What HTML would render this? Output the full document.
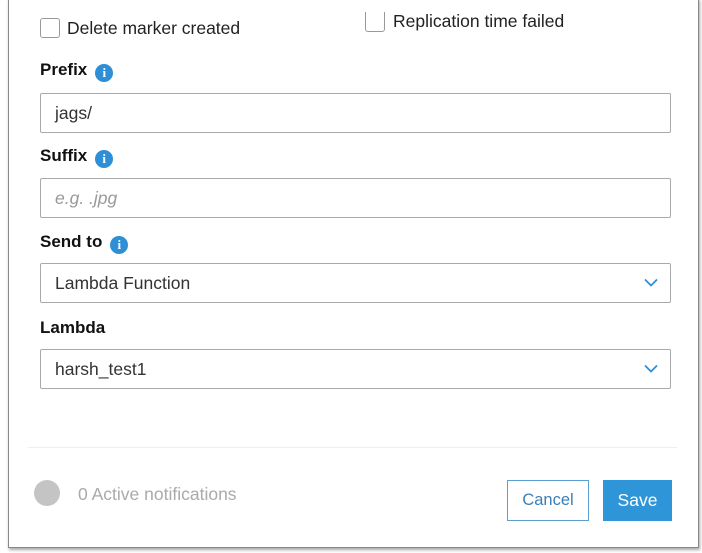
<!DOCTYPE html>
<html><head><style>
body{margin:0;width:702px;height:553px;background:#fff;position:relative;font-family:"Liberation Sans",Arial,sans-serif;overflow:hidden}
.a{position:absolute}
.frame{left:8px;top:-2px;width:689px;height:549px;border:1px solid #888;border-top:none;box-shadow:1px 2px 3px rgba(0,0,0,.35)}
.cb{width:18px;height:18px;border:1px solid #999;border-radius:3px;background:#fff}
.t{font-size:17.5px;color:#222}
.lbl{font-size:17px;font-weight:bold;color:#111}
.info{display:inline-block;width:18px;height:18px;border-radius:50%;background:#2e8fd6;color:#fff;font-size:13px;font-weight:bold;text-align:center;line-height:18px;font-family:"Liberation Serif",serif;margin-left:8px;vertical-align:-2px}
.in{left:40px;height:38px;border:1px solid #aaa;border-radius:2px;font-size:17.5px;color:#333;line-height:38px;padding-left:14px;box-sizing:content-box;width:615px}
.chev{position:absolute;right:12px;top:14px}
</style></head><body>
<div class="a frame"></div>
<div class="a cb" style="left:40px;top:18px"></div>
<div class="a t" style="left:67px;top:18px">Delete marker created</div>
<div class="a cb" style="left:365px;top:12px;border-top:none;border-radius:0 0 3px 3px;height:19px"></div>
<div class="a t" style="left:393px;top:11px">Replication time failed</div>
<div class="a lbl" style="left:40px;top:60px">Prefix<span class="info">i</span></div>
<div class="a in" style="top:93px">jags/</div>
<div class="a lbl" style="left:40px;top:146px">Suffix<span class="info">i</span></div>
<div class="a in" style="top:178px;color:#999;font-style:italic">e.g. .jpg</div>
<div class="a lbl" style="left:40px;top:232px">Send to<span class="info">i</span></div>
<div class="a in" style="top:263px">Lambda Function<svg class="chev" width="14" height="9" viewBox="0 0 14 9"><path d="M1 1.5L7 7.5L13 1.5" stroke="#2e8fd6" stroke-width="1.8" fill="none"/></svg></div>
<div class="a lbl" style="left:40px;top:318px">Lambda</div>
<div class="a in" style="top:349px">harsh_test1<svg class="chev" width="14" height="9" viewBox="0 0 14 9"><path d="M1 1.5L7 7.5L13 1.5" stroke="#2e8fd6" stroke-width="1.8" fill="none"/></svg></div>
<div class="a" style="left:28px;top:447px;width:649px;height:1px;background:#eee"></div>
<div class="a" style="left:34px;top:480px;width:26px;height:26px;border-radius:50%;background:#c4c4c4"></div>
<div class="a" style="left:78px;top:484px;font-size:17.5px;color:#aaa">0 Active notifications</div>
<div class="a" style="left:507px;top:480px;width:80px;height:39px;border:1px solid #5b9fd0;color:#3b7fb8;font-size:16.5px;text-align:center;line-height:39px">Cancel</div>
<div class="a" style="left:603px;top:480px;width:69px;height:41px;background:#2e96d8;color:#fff;font-size:17.5px;text-align:center;line-height:41px">Save</div>
</body></html>
